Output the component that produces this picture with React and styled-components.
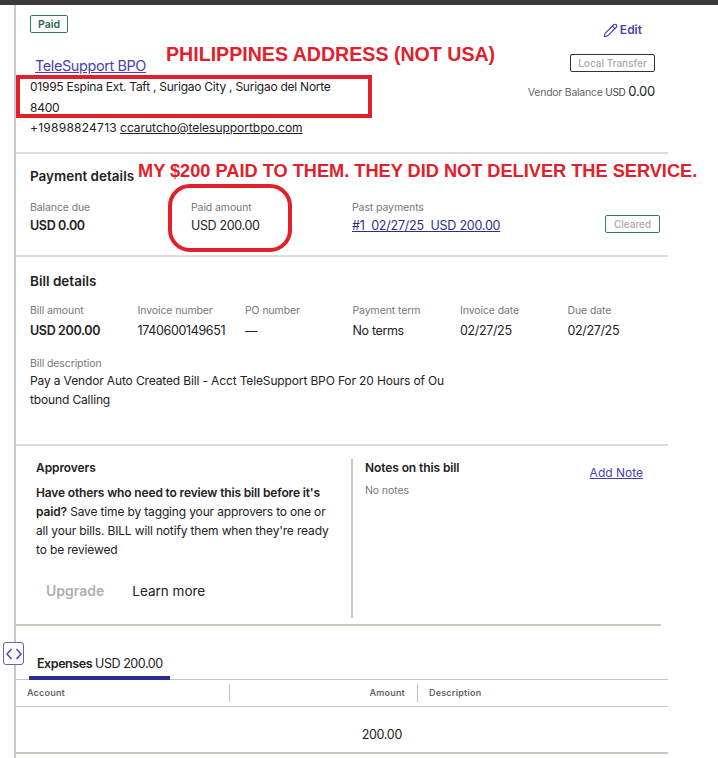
import styled, { createGlobalStyle } from 'styled-components'
import { Pencil } from 'lucide-react'

const GlobalStyle = createGlobalStyle`
    html, body {
        margin: 0;
        padding: 0;
        background: #fff;
    }
    body {
        font-family: Inter, "Liberation Sans", sans-serif;
        color: #222;
    }
`

export default function App() {
    return (
        <Page>
            <GlobalStyle />
            <TopBar />
            <Panel>
                <Header>
                    <HeaderLeft>
                        <Badge>Paid</Badge>
                        <VendorLink href="#">TeleSupport BPO</VendorLink>
                        <Address>01995 Espina Ext. Taft , Surigao City , Surigao del Norte<br />8400</Address>
                        <Address><Phone>+19898824713</Phone> <Email href="#">ccarutcho@telesupportbpo.com</Email></Address>
                    </HeaderLeft>
                    <HeaderRight>
                        <EditLink href="#"><Pencil size={15} strokeWidth={1.8} />Edit</EditLink>
                        <TransferTag>Local Transfer</TransferTag>
                        <VendorBalance>Vendor Balance <small>USD</small> <b>0.00</b></VendorBalance>
                    </HeaderRight>
                </Header>

                <PaymentSection>
                    <SectionTitle>Payment details</SectionTitle>
                    <PaymentRow>
                        <Field>
                            <Label>Balance due</Label>
                            <Value $bold>USD 0.00</Value>
                        </Field>
                        <Field>
                            <Label>Paid amount</Label>
                            <Value>USD 200.00</Value>
                        </Field>
                        <Field>
                            <Label>Past payments</Label>
                            <PaymentLink href="#">#1&nbsp;&nbsp;02/27/25&nbsp;&nbsp;USD 200.00</PaymentLink>
                        </Field>
                        <ClearedTag>Cleared</ClearedTag>
                    </PaymentRow>
                </PaymentSection>

                <BillSection>
                    <SectionTitle>Bill details</SectionTitle>
                    <BillGrid>
                        <Field>
                            <Label>Bill amount</Label>
                            <Value $bold>USD 200.00</Value>
                        </Field>
                        <Field>
                            <Label>Invoice number</Label>
                            <Value>1740600149651</Value>
                        </Field>
                        <Field>
                            <Label>PO number</Label>
                            <Value>—</Value>
                        </Field>
                        <Field>
                            <Label>Payment term</Label>
                            <Value>No terms</Value>
                        </Field>
                        <Field>
                            <Label>Invoice date</Label>
                            <Value>02/27/25</Value>
                        </Field>
                        <Field>
                            <Label>Due date</Label>
                            <Value>02/27/25</Value>
                        </Field>
                    </BillGrid>
                    <Description>
                        <Label>Bill description</Label>
                        <DescriptionText>Pay a Vendor Auto Created Bill - Acct TeleSupport BPO For 20 Hours of Ou<br />tbound Calling</DescriptionText>
                    </Description>
                </BillSection>

                <NotesSection>
                    <Approvers>
                        <CardTitle>Approvers</CardTitle>
                        <ApproverText><b>Have others who need to review this bill before it's paid?</b> Save time by tagging your approvers to one or all your bills. BILL will notify them when they're ready to be reviewed</ApproverText>
                        <ApproverActions>
                            <UpgradeButton>Upgrade</UpgradeButton>
                            <LearnMore>Learn more</LearnMore>
                        </ApproverActions>
                    </Approvers>
                    <Notes>
                        <NotesHead>
                            <CardTitle>Notes on this bill</CardTitle>
                            <AddNote href="#">Add Note</AddNote>
                        </NotesHead>
                        <NoNotes>No notes</NoNotes>
                    </Notes>
                </NotesSection>

                <Tabs>
                    <ActiveTab><b>Expenses</b> USD 200.00</ActiveTab>
                </Tabs>
                <TableHead>
                    <AccountHead>Account</AccountHead>
                    <AmountHead>Amount</AmountHead>
                    <DescriptionHead>Description</DescriptionHead>
                </TableHead>
                <TableRow>
                    <AmountCell>200.00</AmountCell>
                </TableRow>
            </Panel>

            {/* things lying over the page */}
            <CollapseHandle>
                <svg width="16" height="12" viewBox="0 0 16 12" fill="none" stroke="#4a3fb0" strokeWidth="1.4">
                    <path d="M5.5 1 1 6l4.5 5M10.5 1 15 6l-4.5 5" />
                </svg>
            </CollapseHandle>
            <AddressNote>PHILIPPINES ADDRESS (NOT USA)</AddressNote>
            <PaidNote>MY $200 PAID TO THEM. THEY DID NOT DELIVER THE SERVICE.</PaidNote>
            <AddressBox />
            <AmountRing />
        </Page>
    )
}

const Page = styled.div`
    position: relative;
    width: 718px;
    height: 758px;
    overflow: hidden;
    background: #fff;
`
const TopBar = styled.div`
    height: 5px;
    background: #3a3a3a;
`
const Panel = styled.main`
    margin-left: 14px;
    width: 652px;
    height: 753px;
    border-left: 2px solid #c9c9c7;
`
const Header = styled.header`
    height: 149px;
    box-sizing: border-box;
    display: flex;
    justify-content: space-between;
    padding: 10px 13px 0 14px;
    border-bottom: 2px solid #dcdcdc;
`
const HeaderLeft = styled.div`
    display: flex;
    flex-direction: column;
    align-items: flex-start;
`
const Badge = styled.span`
    box-sizing: border-box;
    width: 38px;
    height: 18px;
    display: flex;
    align-items: center;
    justify-content: center;
    border: 1px solid #2f7d63;
    border-radius: 2px;
    font-size: 10.5px;
    font-weight: 600;
    color: #1f6b4f;
`
const VendorLink = styled.a`
    margin: 23px 0 1px 5px;
    font-size: 14.5px;
    line-height: 20px;
    letter-spacing: -0.42px;
    color: #4a3fb0;
`
const Address = styled.div`
    font-size: 12px;
    line-height: 20.5px;
    color: #222;
    letter-spacing: -0.25px;
`
const Phone = styled.span`
    letter-spacing: 0.25px;
`
const Email = styled.a`
    color: #222;
    letter-spacing: -0.03px;
`
const HeaderRight = styled.div`
    display: flex;
    flex-direction: column;
    align-items: flex-end;
`
const EditLink = styled.a`
    display: flex;
    align-items: center;
    gap: 2px;
    margin: 6px 13px 0 0;
    font-size: 12px;
    font-weight: 600;
    line-height: 18px;
    color: #4a3fb0;
    text-decoration: none;
`
const TransferTag = styled.span`
    box-sizing: border-box;
    width: 85px;
    height: 18px;
    margin-top: 15px;
    display: flex;
    align-items: center;
    justify-content: center;
    border: 1px solid #333;
    border-radius: 2px;
    font-size: 10px;
    font-weight: 500;
    color: #aaa;
    white-space: nowrap;
`
const VendorBalance = styled.div`
    margin-top: 10px;
    font-size: 10.5px;
    line-height: 18px;
    letter-spacing: -0.25px;
    color: #666;
    small {
        font-size: 10px;
        color: #444;
    }
    b {
        font-size: 13px;
        font-weight: 400;
        color: #222;
    }
`
const PaymentSection = styled.section`
    height: 103px;
    box-sizing: border-box;
    padding: 13px 7px 0 14px;
    border-bottom: 2px solid #dcdcdc;
`
const SectionTitle = styled.h2`
    margin: 0;
    font-size: 13.5px;
    line-height: 18px;
    font-weight: 600;
    color: #222;
`
const PaymentRow = styled.div`
    display: grid;
    grid-template-columns: 161px 161px 1fr auto;
    margin-top: 16px;
`
const Field = styled.div`
    display: flex;
    flex-direction: column;
    align-items: flex-start;
`
const Label = styled.span`
    font-size: 10.5px;
    line-height: 14px;
    letter-spacing: -0.1px;
    color: #777;
    white-space: nowrap;
`
const Value = styled.span`
    margin-top: 2px;
    font-size: 12.5px;
    line-height: 18px;
    font-weight: ${props => (props.$bold ? 600 : 400)};
    letter-spacing: -0.35px;
    color: #222;
    white-space: nowrap;
`
const PaymentLink = styled.a`
    margin-top: 2px;
    font-size: 12.5px;
    line-height: 18px;
    letter-spacing: -0.22px;
    color: #2a2f8f;
    white-space: nowrap;
`
const ClearedTag = styled.span`
    align-self: end;
    box-sizing: border-box;
    width: 55px;
    height: 18px;
    margin: 0 1px 2px 0;
    display: flex;
    align-items: center;
    justify-content: center;
    border: 1px solid #2f7d63;
    border-radius: 2px;
    font-size: 10px;
    font-weight: 500;
    color: #aaa;
`
const BillSection = styled.section`
    height: 189px;
    box-sizing: border-box;
    padding: 15px 7px 0 14px;
    border-bottom: 2px solid #dcdcdc;
`
const BillGrid = styled.div`
    display: grid;
    grid-template-columns: 107.5px 107.5px 107.5px 107.5px 107.5px 1fr;
    margin-top: 14px;
    ${Value} {
        margin-top: 4px;
    }
`
const Description = styled.div`
    margin-top: 11px;
`
const DescriptionText = styled.div`
    font-size: 12px;
    line-height: 19px;
    letter-spacing: -0.14px;
    color: #222;
`
const NotesSection = styled.section`
    height: 180px;
    box-sizing: border-box;
    width: 645px;
    display: grid;
    grid-template-columns: 337px 1fr;
    padding-top: 13px;
    border-bottom: 2px solid #c9c9c4;
`
const Approvers = styled.div`
    padding: 0 18px 0 20px;
    height: 159px;
    border-right: 2px solid #c9c9c7;
`
const Notes = styled.div`
    padding: 0 18px 0 12px;
`
const NotesHead = styled.div`
    display: flex;
    justify-content: space-between;
    align-items: flex-start;
`
const CardTitle = styled.h3`
    margin: 0;
    font-size: 12px;
    line-height: 18px;
    font-weight: 600;
    letter-spacing: -0.1px;
    color: #222;
`
const ApproverText = styled.p`
    margin: 6px 0 0;
    font-size: 12px;
    line-height: 19px;
    letter-spacing: -0.15px;
    color: #222;
    b {
        font-weight: 600;
    }
`
const ApproverActions = styled.div`
    display: flex;
    align-items: center;
    gap: 28px;
    margin: 22px 0 0 10px;
`
const UpgradeButton = styled.span`
    font-size: 14px;
    line-height: 20px;
    font-weight: 600;
    color: #b0b0b0;
`
const LearnMore = styled.span`
    font-size: 13.5px;
    line-height: 20px;
    color: #222;
`
const AddNote = styled.a`
    margin-top: 5px;
    font-size: 12px;
    line-height: 18px;
    color: #4a3fb0;
`
const NoNotes = styled.div`
    margin-top: 2px;
    font-size: 10.5px;
    line-height: 14px;
    letter-spacing: -0.1px;
    color: #777;
`
const Tabs = styled.div`
    height: 54px;
    box-sizing: border-box;
    display: flex;
    align-items: flex-end;
    padding-left: 13px;
    border-bottom: 1px solid #c4c4c4;
`
const ActiveTab = styled.div`
    width: 141px;
    box-sizing: border-box;
    padding: 0 0 3px 8px;
    border-bottom: 4px solid #2a2f8f;
    margin-bottom: -1px;
    font-size: 12.5px;
    line-height: 18px;
    letter-spacing: -0.45px;
    color: #222;
    white-space: nowrap;
    b {
        font-weight: 600;
    }
`
const TableHead = styled.div`
    height: 27px;
    box-sizing: border-box;
    display: grid;
    grid-template-columns: 214px 188px 1fr;
    align-items: center;
    border-bottom: 1px solid #c4c4c4;
    font-size: 9px;
    font-weight: 600;
    letter-spacing: 0.2px;
    color: #666;
`
const AccountHead = styled.span`
    padding-left: 11px;
    border-right: 1px solid #c4c4c4;
    line-height: 18px;
`
const AmountHead = styled.span`
    padding-right: 12px;
    text-align: right;
    border-right: 1px solid #c4c4c4;
    line-height: 18px;
`
const DescriptionHead = styled.span`
    padding-left: 11px;
    line-height: 18px;
`
const TableRow = styled.div`
    height: 47px;
    box-sizing: border-box;
    display: grid;
    grid-template-columns: 402px 1fr;
    align-items: center;
    padding-top: 9px;
    border-bottom: 2px solid #c9c9c4;
`
const AmountCell = styled.span`
    grid-column: 1;
    padding-right: 16px;
    text-align: right;
    font-size: 12.5px;
    letter-spacing: -0.3px;
    color: #222;
`
const CollapseHandle = styled.div`
    position: absolute;
    left: 3px;
    top: 642px;
    width: 21px;
    height: 23px;
    box-sizing: border-box;
    display: flex;
    align-items: center;
    justify-content: center;
    background: #fff;
    border: 1px solid #6a5fc0;
    border-radius: 3px;
`
const AddressNote = styled.div`
    position: absolute;
    left: 166px;
    top: 42px;
    font-family: "Liberation Sans", Arial, sans-serif;
    font-size: 19.6px;
    line-height: 24px;
    font-weight: 700;
    color: #e2202c;
    white-space: nowrap;
`
const PaidNote = styled.div`
    position: absolute;
    left: 138px;
    top: 161px;
    font-family: "Liberation Sans", Arial, sans-serif;
    font-size: 18.2px;
    line-height: 21px;
    font-weight: 700;
    color: #e2202c;
    white-space: nowrap;
`
const AddressBox = styled.div`
    position: absolute;
    left: 16px;
    top: 75px;
    width: 356px;
    height: 43px;
    box-sizing: border-box;
    border: 4px solid #e2202c;
`
const AmountRing = styled.div`
    position: absolute;
    left: 168px;
    top: 184px;
    width: 124px;
    height: 68px;
    box-sizing: border-box;
    border: 4px solid #e2202c;
    border-radius: 22px;
`
